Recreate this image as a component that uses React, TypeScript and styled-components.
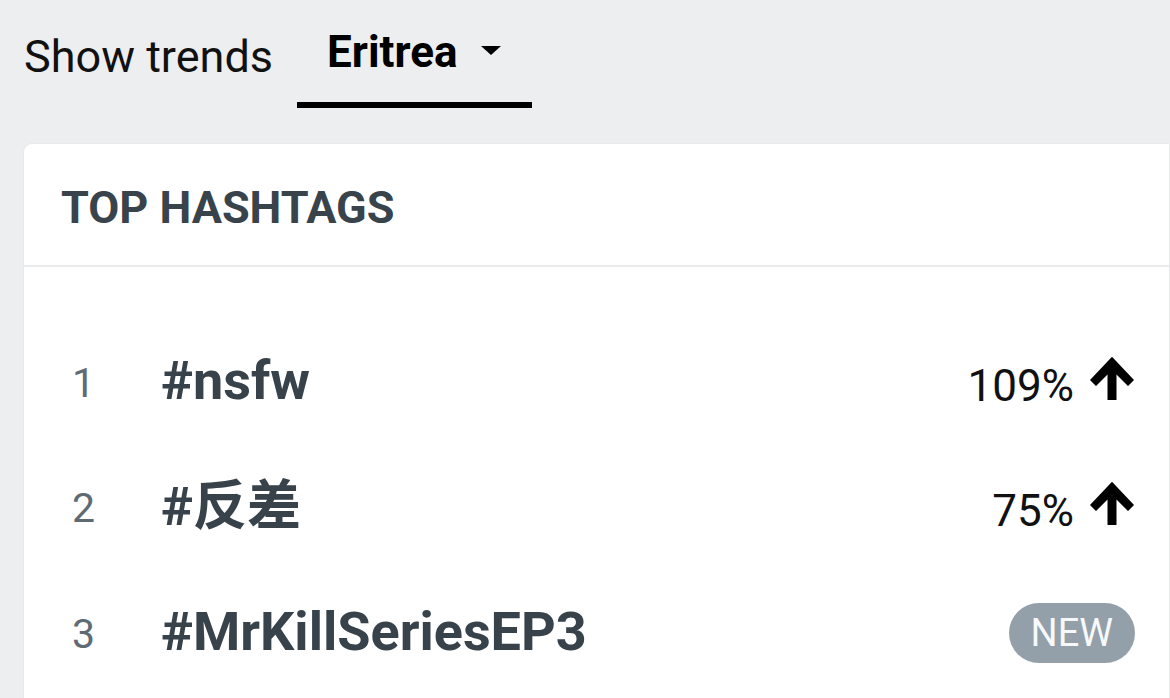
import React from "react";
import styled, { createGlobalStyle } from "styled-components";

const GlobalStyle = createGlobalStyle`
  html, body {
    margin: 0;
    padding: 0;
    background: #edeef0;
    overflow: hidden;
  }
  body {
    font-family: Roboto, "Noto Sans CJK SC", sans-serif;
  }
`;

type Trend = {
  rank: number;
  tag: string;
  change?: string;
};

const trends: Trend[] = [
  { rank: 1, tag: "#nsfw", change: "109%" },
  { rank: 2, tag: "#反差", change: "75%" },
  { rank: 3, tag: "#MrKillSeriesEP3" },
];

const UpArrow: React.FC = () => (
  <ArrowIcon width="46" height="46" viewBox="0 0 46 46">
    <path d="M23 1.7 L45 25 L39 31 L27.5 19.5 L27.5 45 L18.5 45 L18.5 19.5 L7 31 L1 25 Z" />
  </ArrowIcon>
);

const App: React.FC = () => {
  return (
    <>
      <GlobalStyle />
      <Page>
        <TopBar>
          <Label>Show trends</Label>
          <CountryTab>
            <CountryName>Eritrea</CountryName>
            <Caret />
          </CountryTab>
        </TopBar>

        <Card>
          <CardHeader>
            <CardTitle>TOP HASHTAGS</CardTitle>
          </CardHeader>
          <List>
            {trends.map((t) => (
              <Row key={t.rank}>
                <Rank>{t.rank}</Rank>
                <Tag>{t.tag}</Tag>
                {t.change ? (
                  <Change>
                    <Percent>{t.change}</Percent>
                    <UpArrow />
                  </Change>
                ) : (
                  <NewBadge>NEW</NewBadge>
                )}
              </Row>
            ))}
          </List>
        </Card>
      </Page>
    </>
  );
};

export default App;

const Page = styled.div`
  width: 1170px;
  height: 698px;
  padding-left: 24px;
  box-sizing: border-box;
`;

const TopBar = styled.div`
  display: flex;
  align-items: flex-start;
  gap: 24px;
`;

const Label = styled.div`
  font-size: 45px;
  line-height: 1;
  color: #111;
  margin-top: 33.8px;
`;

const CountryTab = styled.div`
  display: flex;
  align-items: center;
  gap: 24px;
  padding: 29.7px 31px 28.3px 30px;
  border-bottom: 6px solid #000;
`;

const CountryName = styled.span`
  font-size: 44px;
  font-weight: 700;
  line-height: 1;
  color: #000;
`;

const Caret = styled.span`
  width: 0;
  height: 0;
  border-left: 10px solid transparent;
  border-right: 10px solid transparent;
  border-top: 9px solid #000;
  margin-bottom: 3px;
`;

const Card = styled.div`
  margin-top: 36px;
  margin-right: 1px;
  background: #fff;
  border-radius: 8px 0 0 0;
  box-shadow: 0 0 2px rgba(0, 0, 0, 0.08);
  height: 560px;
`;

const CardHeader = styled.div`
  height: 123px;
  box-sizing: border-box;
  padding: 6px 36px 0 37px;
  display: flex;
  align-items: center;
  border-bottom: 2px solid #e9ebed;
`;

const CardTitle = styled.h2`
  margin: 0;
  font-size: 45px;
  font-weight: 700;
  line-height: 1;
  color: #39434b;
`;

const List = styled.div`
  padding: 51.4px 34px 0 48px;
`;

const Row = styled.div`
  height: 125.6px;
  display: flex;
  align-items: center;
`;

const Rank = styled.span`
  width: 89px;
  flex-shrink: 0;
  font-size: 41px;
  line-height: 1;
  color: #5e6a74;
  margin-top: 4px;
`;

const Tag = styled.span`
  flex: 1;
  font-size: 54px;
  font-weight: 700;
  line-height: 1;
  color: #37424a;
  white-space: nowrap;
`;

const Change = styled.span`
  display: flex;
  align-items: baseline;
  gap: 15px;
`;

const Percent = styled.span`
  font-size: 44px;
  line-height: 1;
  color: #111;
`;

const ArrowIcon = styled.svg`
  display: block;
  fill: #000;
  flex-shrink: 0;
`;

const NewBadge = styled.span`
  height: 60px;
  padding: 0 22px;
  border-radius: 30px;
  background: #939fa9;
  color: #f6f8f9;
  font-size: 38px;
  line-height: 1;
  display: flex;
  align-items: center;
  margin-top: 1px;
`;
